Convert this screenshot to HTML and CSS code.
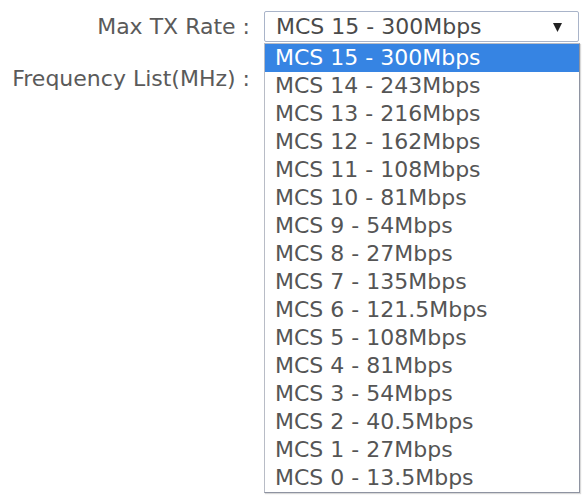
FILE: index.html
```html
<!DOCTYPE html>
<html lang="en">
<head>
  <meta charset="UTF-8" />
  <title>Wireless Settings</title>
  <link rel="stylesheet" href="styles.css">
</head>
<body>

<div class="form">
  <label class="label">Max TX Rate :</label>
  <div class="field">
    <div class="select">
      <span>MCS 15 - 300Mbps</span>
      <svg class="arrow" width="9" height="9" viewBox="0 0 9 9"><polygon points="0,0 9,0 4.5,9" fill="#222"/></svg>
    </div>
    <ul class="options">
      <li class="active">MCS 15 - 300Mbps</li>
      <li>MCS 14 - 243Mbps</li>
      <li>MCS 13 - 216Mbps</li>
      <li>MCS 12 - 162Mbps</li>
      <li>MCS 11 - 108Mbps</li>
      <li>MCS 10 - 81Mbps</li>
      <li>MCS 9 - 54Mbps</li>
      <li>MCS 8 - 27Mbps</li>
      <li>MCS 7 - 135Mbps</li>
      <li>MCS 6 - 121.5Mbps</li>
      <li>MCS 5 - 108Mbps</li>
      <li>MCS 4 - 81Mbps</li>
      <li>MCS 3 - 54Mbps</li>
      <li>MCS 2 - 40.5Mbps</li>
      <li>MCS 1 - 27Mbps</li>
      <li>MCS 0 - 13.5Mbps</li>
    </ul>
  </div>

  <label class="label">Frequency List(MHz) :</label>
  <div class="field"></div>
</div>

</body>
</html>
```

FILE: styles.css
```css
html, body {
  height: 100%;
}

body {
  margin: 0;
  padding: 0;
  min-height: 498px;
  background: #fff;
  font-family: 'DejaVu Sans', Verdana, sans-serif;
  font-size: 22px;
  color: #555;
}

.form {
  display: grid;
  grid-template-columns: 250px 315px;
  grid-auto-rows: 31px;
  column-gap: 14px;
  row-gap: 21px;
  padding-top: 11px;
}

.label {
  text-align: right;
  line-height: 31px;
  white-space: nowrap;
  color: #5a5a5a;
}

.field {
  position: relative;
}

.select {
  display: flex;
  align-items: center;
  justify-content: space-between;
  height: 31px;
  box-sizing: border-box;
  border: 1px solid #a9b4c9;
  border-radius: 2px;
  padding: 0 16px 0 11px;
  color: #4a4a4a;
  background: #fff;
}

.arrow {
  margin-top: 1px;
}

.options {
  position: absolute;
  top: 32px;
  left: 0;
  width: 316px;
  box-sizing: border-box;
  margin: 0;
  padding: 0;
  list-style: none;
  background: #fff;
  border: 1px solid #b8bcc6;
  border-right-color: #8e93a1;
  border-bottom-color: #8e93a1;
  box-shadow: 1px 1px 1px rgba(0,0,0,0.15);
  z-index: 10;
}

.options li {
  height: 28px;
  line-height: 28px;
  padding-left: 10px;
  white-space: nowrap;
  color: #555;
}

.options li.active {
  background: #3684e3;
  color: #fff;
}
```
